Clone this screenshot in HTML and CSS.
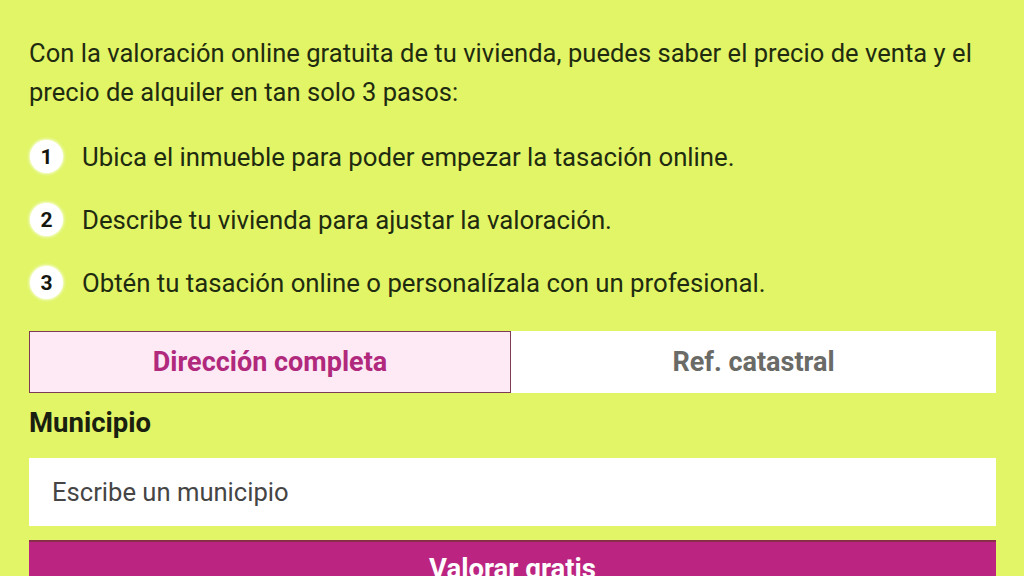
FILE: index.html
```html
<!DOCTYPE html>
<html lang="es">
<head>
<meta charset="utf-8">
<title>Valoración online</title>
<link rel="stylesheet" href="styles.css">
</head>
<body>
<main class="panel">
  <p class="intro">Con la valoración online gratuita de tu vivienda, puedes saber el precio de venta y el precio de alquiler en tan solo 3 pasos:</p>
  <ol class="steps">
    <li class="step"><span class="num">1</span><span class="step-text">Ubica el inmueble para poder empezar la tasación online.</span></li>
    <li class="step"><span class="num">2</span><span class="step-text">Describe tu vivienda para ajustar la valoración.</span></li>
    <li class="step"><span class="num">3</span><span class="step-text">Obtén tu tasación online o personalízala con un profesional.</span></li>
  </ol>
  <div class="tabs">
    <button class="tab tab-active">Dirección completa</button>
    <button class="tab">Ref. catastral</button>
  </div>
  <label class="label" for="muni">Municipio</label>
  <input id="muni" class="input" type="text" placeholder="Escribe un municipio">
  <button class="cta">Valorar gratis</button>
</main>
</body>
</html>
```
FILE: styles.css
```css
html, body {
  margin: 0;
  padding: 0;
  background: #e1f566;
}
body {
  font-family: Roboto, "Liberation Sans", sans-serif;
  color: #1f2b10;
  overflow: hidden;
}
.panel {
  display: flex;
  flex-direction: column;
  padding: 34px 28px 0 29px;
  width: 967px;
}
.intro {
  margin: 0;
  font-size: 25.5px;
  line-height: 39px;
  letter-spacing: 0.04px;
}
.steps {
  list-style: none;
  margin: 13px 0 0;
  padding: 0;
  display: flex;
  flex-direction: column;
}
.step {
  display: flex;
  align-items: center;
  height: 63px;
}
.num {
  width: 33px;
  height: 33px;
  border-radius: 50%;
  background: #ffffff;
  box-shadow: 0 0 3px 1px rgba(255,255,255,0.8);
  display: flex;
  align-items: center;
  justify-content: center;
  font-weight: 700;
  font-size: 21px;
  color: #14160f;
  margin-left: 1px;
  margin-right: 19px;
  flex: none;
}
.step-text {
  font-size: 25.75px;
}
.tabs {
  display: flex;
  margin-top: 17px;
  height: 62px;
}
.tab {
  flex: 1;
  border: none;
  background: #ffffff;
  font-family: Roboto, "Liberation Sans", sans-serif;
  font-weight: 700;
  font-size: 27px;
  color: #6a6a66;
  padding: 0;
}
.tab-active {
  flex: 0 0 482px;
  background: #fdeaf5;
  border: 1px solid #7e3b55;
  color: #b0297c;
}
.label {
  margin-top: 15px;
  font-weight: 700;
  font-size: 27.5px;
  line-height: 30px;
  color: #1a2010;
}
.input {
  margin-top: 20px;
  height: 68px;
  border: none;
  background: #ffffff;
  padding: 0 23px;
  font-family: Roboto, "Liberation Sans", sans-serif;
  font-size: 25.6px;
  outline: none;
}
.input::placeholder {
  color: #454545;
}
.cta {
  margin-top: 14px;
  height: 60px;
  border: none;
  border-top: 2px solid #8a2d4a;
  background: #bb2581;
  color: #ffffff;
  font-family: Roboto, "Liberation Sans", sans-serif;
  font-weight: 700;
  font-size: 27.5px;
  line-height: 1;
  padding: 13px 0 0;
  display: flex;
  align-items: flex-start;
  justify-content: center;
}
```
